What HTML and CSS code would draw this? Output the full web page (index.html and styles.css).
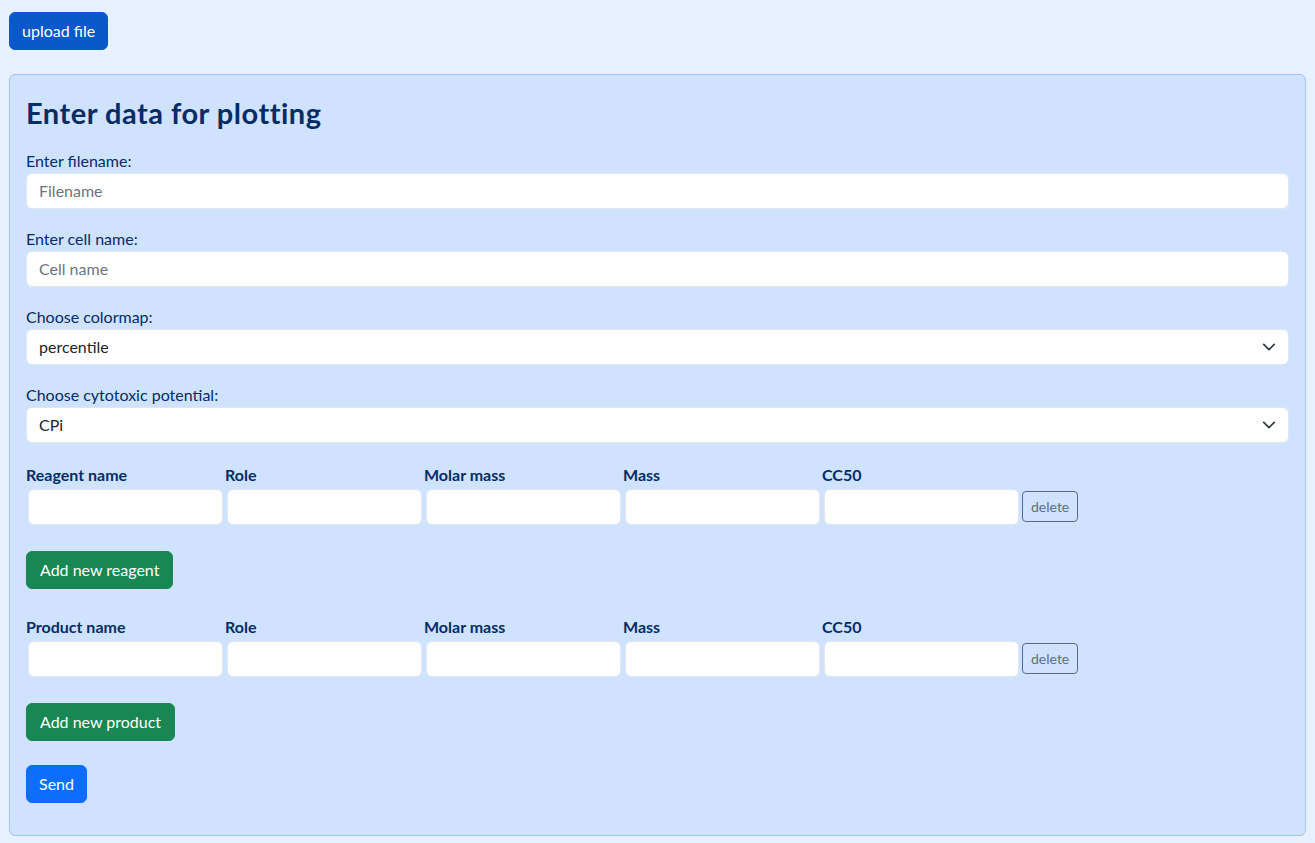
FILE: index.html
```html
<!DOCTYPE html>
<html lang="en">
<head>
<meta charset="utf-8">
<title>Enter data for plotting</title>
<link rel="stylesheet" href="styles.css">
</head>
<body>
<div class="page">
  <button class="btn btn-upload" type="button">upload file</button>
  <div class="card">
    <h3 class="title">Enter data for plotting</h3>

    <div class="field">
      <label class="label" for="fn">Enter filename:</label>
      <input class="control" id="fn" type="text" placeholder="Filename">
    </div>
    <div class="field">
      <label class="label" for="cn">Enter cell name:</label>
      <input class="control" id="cn" type="text" placeholder="Cell name">
    </div>
    <div class="field">
      <label class="label" for="cm">Choose colormap:</label>
      <div class="select-wrap">
        <select class="control select" id="cm"><option>percentile</option></select>
        <svg class="chevron" viewBox="0 0 16 16" width="14" height="14"><path d="m2 5 6 6 6-6" fill="none" stroke="#343a40" stroke-width="2" stroke-linecap="round" stroke-linejoin="round"/></svg>
      </div>
    </div>
    <div class="field">
      <label class="label" for="cp">Choose cytotoxic potential:</label>
      <div class="select-wrap">
        <select class="control select" id="cp"><option>CPi</option></select>
        <svg class="chevron" viewBox="0 0 16 16" width="14" height="14"><path d="m2 5 6 6 6-6" fill="none" stroke="#343a40" stroke-width="2" stroke-linecap="round" stroke-linejoin="round"/></svg>
      </div>
    </div>

    <table class="grid">
      <thead>
        <tr><th>Reagent name</th><th>Role</th><th>Molar mass</th><th>Mass</th><th>CC50</th><th class="th-del"></th></tr>
      </thead>
      <tbody>
        <tr>
          <td><input class="cell" type="text"></td>
          <td><input class="cell" type="text"></td>
          <td><input class="cell" type="text"></td>
          <td><input class="cell" type="text"></td>
          <td><input class="cell" type="text"></td>
          <td class="td-del"><button class="btn-del" type="button" disabled>delete</button></td>
        </tr>
      </tbody>
    </table>
    <button class="btn btn-green btn-add" type="button">Add new reagent</button>

    <table class="grid grid-2">
      <thead>
        <tr><th>Product name</th><th>Role</th><th>Molar mass</th><th>Mass</th><th>CC50</th><th class="th-del"></th></tr>
      </thead>
      <tbody>
        <tr>
          <td><input class="cell" type="text"></td>
          <td><input class="cell" type="text"></td>
          <td><input class="cell" type="text"></td>
          <td><input class="cell" type="text"></td>
          <td><input class="cell" type="text"></td>
          <td class="td-del"><button class="btn-del" type="button" disabled>delete</button></td>
        </tr>
      </tbody>
    </table>
    <button class="btn btn-green btn-add" type="button">Add new product</button>

    <button class="btn btn-send" type="button">Send</button>
  </div>
</div>
</body>
</html>
```

FILE: styles.css
```css
* { box-sizing: border-box; }

html, body {
  margin: 0;
  padding: 0;
}

body {
  background: #e7f0ff;
  font-family: Lato, "Noto Sans", "Liberation Sans", sans-serif;
  font-size: 16px;
  line-height: 24px;
  color: #052c65;
}

.page {
  padding: 12px 9px 8px 9px;
  display: flex;
  flex-direction: column;
  align-items: flex-start;
}

.btn {
  display: inline-block;
  font-family: inherit;
  font-size: 16px;
  line-height: 24px;
  padding: 6px 12px;
  border: 1px solid transparent;
  border-radius: 6px;
  color: #fff;
  cursor: pointer;
}

.btn-upload {
  background: #0a58ca;
  border-color: #0a58ca;
}

.card {
  align-self: stretch;
  margin-top: 24px;
  background: #cfe2ff;
  border: 1px solid #9ec5fe;
  border-radius: 6px;
  padding: 16px;
  display: flex;
  flex-direction: column;
  align-items: flex-start;
}

.title {
  margin: 5px 0 19px;
  font-size: 29px;
  line-height: 33.6px;
  letter-spacing: 0.5px;
  font-weight: 700;
  color: #052c65;
}

.field {
  align-self: stretch;
  margin-bottom: 18px;
}

.label {
  display: block;
  line-height: 24px;
  color: #052c65;
}

.control {
  display: block;
  width: 100%;
  height: 36px;
  padding: 0 12px;
  font-family: inherit;
  font-size: 16px;
  color: #212529;
  background: #fff;
  border: 1px solid #dfe6f0;
  border-radius: 6px;
  outline: none;
}

.control::placeholder {
  color: #6c757d;
}

.select-wrap {
  position: relative;
}

.select {
  appearance: none;
  -webkit-appearance: none;
  padding-right: 36px;
}

.chevron {
  position: absolute;
  right: 13px;
  top: 11px;
  pointer-events: none;
}

.grid {
  border-collapse: collapse;
  border-spacing: 0;
  margin-top: 2px;
}

.grid-2 {
  margin-top: 26px;
}

.grid th {
  width: 199px;
  padding: 0;
  text-align: left;
  font-weight: 700;
  line-height: 24px;
  color: #052c65;
}

.grid th.th-del {
  width: auto;
}

.grid td {
  padding: 2px;
  vertical-align: middle;
}

.grid td.td-del {
  padding: 2px 1px;
}

.cell {
  display: block;
  width: 195px;
  height: 36px;
  padding: 0 8px;
  font-family: inherit;
  font-size: 16px;
  background: #fff;
  border: 1px solid #dfe6f0;
  border-radius: 6px;
  outline: none;
}

.btn-del {
  font-family: inherit;
  font-size: 14px;
  line-height: 21px;
  padding: 4px 8px;
  background: transparent;
  border: 1px solid #56698f;
  border-radius: 4px;
  color: #5f6d86;
}

.btn-green {
  padding: 6px 13px;
  background: #198754;
  border-color: #198754;
}

.btn-add {
  margin-top: 24px;
}

.btn-send {
  margin-top: 24px;
  margin-bottom: 16px;
  background: #0d6efd;
  border-color: #0d6efd;
}
```
